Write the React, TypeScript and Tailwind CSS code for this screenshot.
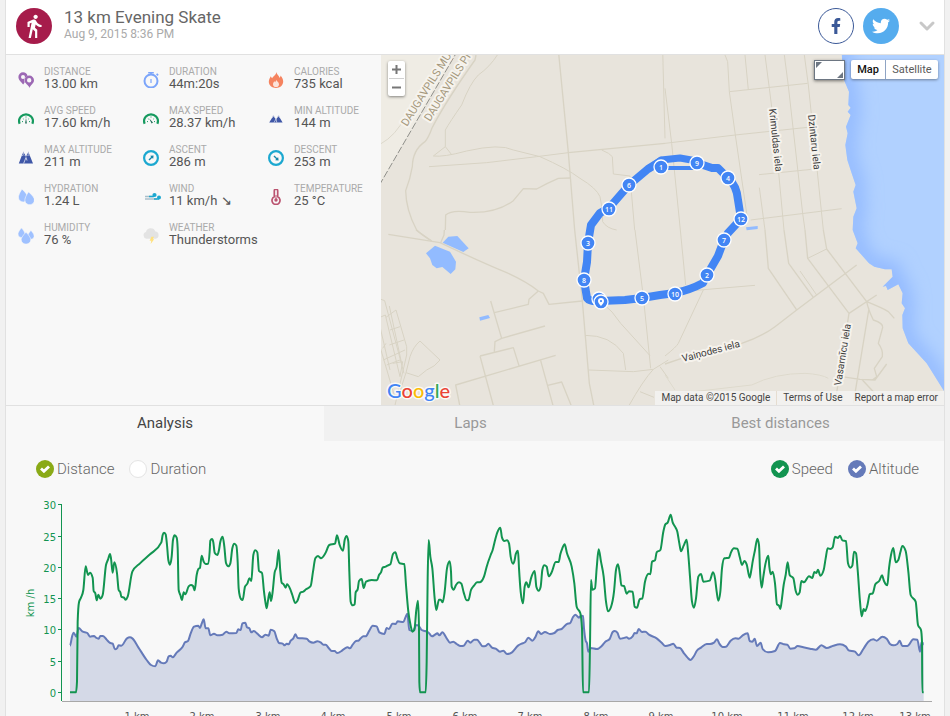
import React from "react";
import { MdDirectionsWalk } from "react-icons/md";
import { FaFacebookF, FaTwitter } from "react-icons/fa";
import { ChevronDown } from "lucide-react";

type Point = [number, number];

/* ---------- Stat icons (16 × 16) ---------- */

function Glyph({ children }: { children: React.ReactNode }) {
  return (
    <svg viewBox="0 0 16 16" className="h-4 w-4 shrink-0" aria-hidden="true">
      {children}
    </svg>
  );
}

const DROP = "M4 0C4 0 0 4.2 0 7.2A4 4 0 0 0 8 7.2C8 4.2 4 0 4 0Z";

const DistanceIcon = () => (
  <Glyph>
    <g fill="#9c68b4">
      <path fillRule="evenodd" d="M5 .3A4.6 4.6 0 0 0 .4 5C.4 8 3.6 10.400 5.200 12.500L6.600 10.500A5.300 5.300 0 0 1 9.500 4A4.600 4.600 0 0 0 5 .300ZM5 3A2 2 0 1 1 5 7A2 2 0 0 1 5 3Z" />
      <path fillRule="evenodd" d="M11.200 3.600A4.700 4.700 0 0 0 6.600 8.300C6.600 11.600 10.500 13 11.700 15.900C12.300 13 16 11.500 16 8.300A4.700 4.700 0 0 0 11.200 3.600ZM11.200 6.100A2.200 2.200 0 1 1 11.200 10.500A2.200 2.200 0 0 1 11.200 6.100Z" />
    </g>
  </Glyph>
);

const DurationIcon = () => (
  <Glyph>
    <circle cx="8" cy="9" r="6.500" fill="none" stroke="#7ca5fa" strokeWidth="2" />
    <path d="M5.200 0H10.800V1.500H8.800V3H7.200V1.500H5.200ZM13 2.300L14.300 1.200L15.700 2.700L14.500 3.900ZM7.400 7H8.600V11H7.400Z" fill="#7ca5fa" />
  </Glyph>
);

const CaloriesIcon = () => (
  <Glyph>
    <path d="M8.300 0C8.800 2.500 11 3.600 11.500 5.800C12.200 5.400 12.600 4.500 12.500 3.500C14.300 5.300 15.200 7.500 15.200 9.600C15.200 13.400 12 16 8 16S.8 13.400.8 9.800C.8 7.500 2 6 2.800 4.200C3.300 5 3.500 5.700 4.200 6.300C5 4.200 8.300 3 8.300 0Z" fill="#f5835f" />
    <path d="M8.200 7.800C8.500 9.400 11 10.200 11 12.200A3 2.800 0 0 1 5 12.200C5 10.600 6 10 6.200 9.200C6.700 9.500 7 9.800 7.200 10.200C7.700 9.500 8.200 8.800 8.200 7.800Z" fill="#fbe3da" />
  </Glyph>
);

const GaugeIcon = ({ max }: { max?: boolean }) => (
  <Glyph>
    <path d="M1.700 12.800C.7 10.500 1 7.500 2.900 5.500A7 7 0 0 1 13.100 5.500C15 7.500 15.300 10.500 14.300 12.800" fill="none" stroke="#169a5f" strokeWidth="2.200" />
    <path d="M4 10.600H5M11 10.600H12M4.900 7.500L5.600 8.100M11.100 7.500L10.400 8.100M8 5.500V6.500" stroke="#169a5f" strokeWidth="1" />
    <path d={max ? "M6.200 7.400L10 11.400L8.600 12.600Z" : "M8 7L8.900 12.500H7.100Z"} fill="#1c6b55" />
  </Glyph>
);

const MaxAltitudeIcon = () => (
  <Glyph>
    <path d="M.8 13.500L4.600 3.500H6.400L8 7L9.300 3.500H11L15 13.500Z" fill="#3f57a7" />
    <path d="M4.700 3.600L5.300 1.200L6.100 3.600ZM9.700 3.600L10.300 1.200L11 3.600Z" fill="#9aa4cd" />
    <path d="M4.300 5.800L5.300 4.600L6.200 5.600M9.200 5.600L10.200 4.600L11.100 5.800M5.600 13.500L8 7.500L9 10.500" fill="none" stroke="#e4e7f2" strokeWidth=".8" />
  </Glyph>
);

const MinAltitudeIcon = () => (
  <Glyph>
    <path d="M1.200 11.500L5.400 4.800L8 8.600L10.600 4.800L14.600 11.500Z" fill="#3f57a7" />
    <path d="M4.300 6.800L5.400 4.600L6.600 6.600M9.400 6.600L10.600 4.600L11.700 6.800" fill="none" stroke="#c4cae2" strokeWidth=".9" />
    <path d="M6 11.500L8 8L8.800 11.500" fill="none" stroke="#dfe3f0" strokeWidth=".7" />
  </Glyph>
);

const CompassIcon = ({ down }: { down?: boolean }) => (
  <Glyph>
    <circle cx="8" cy="8" r="6.900" fill="none" stroke="#1ca8d0" strokeWidth="2.200" />
    <path
      d="M10.600 5.400L10.200 8.800L9 7.900L6.500 10.500L5.500 9.500L8.100 7L7.200 5.800Z"
      fill="#1686a8"
      transform={down ? "rotate(90 8 8)" : undefined}
    />
  </Glyph>
);

const HydrationIcon = () => (
  <Glyph>
    <g fill="#9fc1ff" stroke="#f8f8f8" strokeWidth=".5">
      <path d={DROP} transform="translate(0 .2) rotate(-8 4 5) scale(1.150)" />
      <path d={DROP} transform="translate(6.400 3) rotate(-8 4 5) scale(1.200 1.150)" />
    </g>
  </Glyph>
);

const HumidityIcon = () => (
  <Glyph>
    <g fill="#9fc1ff" stroke="#f8f8f8" strokeWidth=".5">
      <path d={DROP} transform="translate(.1 0) scale(.85)" />
      <path d={DROP} transform="translate(9.800 2.500) scale(.78)" />
      <path d={DROP} transform="translate(3.200 4.300) scale(1.200 1.050)" />
    </g>
  </Glyph>
);

const WindIcon = () => (
  <svg viewBox="0 0 18 16" className="-mr-[2px] h-4 w-[18px] shrink-0" aria-hidden="true">
    <path d="M2 7.500H10M2 10H14" stroke="#a9bfca" strokeWidth="1.500" />
    <path d="M6 7.500H11M11 10H16" stroke="#1ca8d0" strokeWidth="1.500" />
    <circle cx="11.500" cy="6" r="2.100" fill="#1ca8d0" />
    <circle cx="16" cy="8.500" r="2" fill="#1ca8d0" />
  </svg>
);

const TemperatureIcon = () => (
  <Glyph>
    <path d="M6.300 1.800A1.700 1.700 0 0 1 9.700 1.800V7.800A4 4 0 1 1 6.300 7.800Z" fill="none" stroke="#bb5470" strokeWidth="1.700" />
    <circle cx="8" cy="11" r="1.700" fill="#bb5470" />
    <path d="M8 6V11" stroke="#bb5470" strokeWidth="1" />
  </Glyph>
);

const WeatherIcon = () => (
  <Glyph>
    <path d="M3.500 10.700A3.500 3.500 0 0 1 3 3.900A4.900 4.900 0 0 1 12.400 3.600A3.600 3.600 0 0 1 12.700 10.700Z" fill="#e3e3e3" />
    <path d="M8.500 8.800H11L9.700 11.200H11.200L7.600 16L8.300 12.800H6.600Z" fill="#ffe17d" />
  </Glyph>
);

const stats: { label: string; value: string; icon: React.ReactNode }[] = [
  { label: "DISTANCE", value: "13.00 km", icon: <DistanceIcon /> },
  { label: "DURATION", value: "44m:20s", icon: <DurationIcon /> },
  { label: "CALORIES", value: "735 kcal", icon: <CaloriesIcon /> },
  { label: "AVG SPEED", value: "17.60 km/h", icon: <GaugeIcon /> },
  { label: "MAX SPEED", value: "28.37 km/h", icon: <GaugeIcon max /> },
  { label: "MIN ALTITUDE", value: "144 m", icon: <MinAltitudeIcon /> },
  { label: "MAX ALTITUDE", value: "211 m", icon: <MaxAltitudeIcon /> },
  { label: "ASCENT", value: "286 m", icon: <CompassIcon /> },
  { label: "DESCENT", value: "253 m", icon: <CompassIcon down /> },
  { label: "HYDRATION", value: "1.24 L", icon: <HydrationIcon /> },
  { label: "WIND", value: "11 km/h ↘", icon: <WindIcon /> },
  { label: "TEMPERATURE", value: "25 °C", icon: <TemperatureIcon /> },
  { label: "HUMIDITY", value: "76 %", icon: <HumidityIcon /> },
  { label: "WEATHER", value: "Thunderstorms", icon: <WeatherIcon /> },
];

/* ---------- Map ---------- */

const markers: { x: number; y: number; n: string }[] = [
  { x: 661, y: 167, n: "1" },
  { x: 697, y: 163, n: "9" },
  { x: 728, y: 178, n: "4" },
  { x: 741, y: 219, n: "12" },
  { x: 724, y: 240, n: "7" },
  { x: 707, y: 275, n: "2" },
  { x: 675, y: 294, n: "10" },
  { x: 642, y: 298, n: "5" },
  { x: 584, y: 280, n: "8" },
  { x: 588, y: 243, n: "3" },
  { x: 609, y: 209, n: "11" },
  { x: 629, y: 185, n: "6" },
];

const COAST =
  "M530 120L530 165L537 240L552 275L550 315L557 323L548 335L557 345L543 380L548 400L541 435L547 480L560 520L572 555L565 575L575 625L565 650L563 690L578 730L572 745L590 765L612 790L628 800L660 808L680 808L683 830L653 860L663 858L668 870L700 853L713 880L710 910L720 925L712 945L713 985L730 1030L785 1090L840 1178L900 1250";

function StreetLabel({ x, y, angle, size, fill, children }: { x: number; y: number; angle: number; size: number; fill: string; children: string }) {
  return (
    <text
      transform={`translate(${x} ${y}) rotate(${angle})`}
      fontSize={size}
      fill={fill}
      stroke="#f6f3ed"
      strokeWidth="4"
      strokeLinejoin="round"
      paintOrder="stroke"
    >
      {children}
    </text>
  );
}

function MapCanvas() {
  return (
    <svg viewBox="0 0 563 350" preserveAspectRatio="xMidYMid slice" className="block h-full w-full" role="img" aria-label="Route map">
      <defs>
        <clipPath id="sea">
          <path d={`${COAST}L1000 1250V120Z`} />
        </clipPath>
        <filter id="soften" x="-50%" y="-20%" width="200%" height="140%">
          <feGaussianBlur stdDeviation="26" />
        </filter>
      </defs>
      <rect width="563" height="350" fill="#e8e4dc" />

      {/* north-west */}
      <g transform="translate(-1 -5) scale(.333333)" fill="none" stroke="#d8d3c4" strokeWidth="4" strokeLinejoin="round">
        <path d="M0 0H234L0 402Z" fill="#efece4" stroke="none" />
        <path d="M234 0L0 402" stroke="#8f8f8a" strokeWidth="3" strokeDasharray="22 6" />
        <path d="M288 15L285 30Q200 150 157 232Q145 265 135 275Q98 300 97 350Q90 390 77 422Q78 480 110 540Q125 555 155 573" />
        <path d="M352 15Q330 50 295 75Q270 100 245 165Q210 215 196 240V290L215 314" strokeWidth="3" />
        <path d="M196 290L160 318Q190 322 260 303Q360 280 400 300L480 320Q560 355 600 385Q650 415 660 440Q670 480 668 515Q680 535 710 540" strokeWidth="3" />
        <path d="M147 350L320 338L470 320L565 308" strokeWidth="3" />
        <path d="M565 308L855 280" />
        <path d="M535 0L565 308L584 540" />
        <path d="M570 384L535 385Q500 400 470 417L430 416Q410 440 400 452Q350 490 270 487Q215 478 197 495L196 540" />
        <path d="M665 300Q690 310 697 320L700 372L750 378L764 540" strokeWidth="3" />
        <path d="M0 283Q50 255 75 200" stroke="#dcd8cb" strokeWidth="3" />
        <path d="M848 0L855 265" strokeWidth="3" />
      </g>

      {/* south-west */}
      <g transform="translate(-1 175) scale(.333333)" fill="none" stroke="#d8d3c4" strokeWidth="4" strokeLinejoin="round">
        <path d="M25 13L180 38Q300 95 380 128Q440 155 475 183L490 190L507 223L607 213" />
        <path d="M108 0L155 33M193 0L192 15L182 38" />
        <path d="M475 183L447 208L445 223L343 248M332 213L365 325L495 288M365 325L345 335L343 365M300 378L400 353L417 407M300 378L341 530M240 530L227 465L527 376M482 392L520 530M503 466L545 456L575 530" />
        <path d="M584 0L607 213L628 460L642 530" />
        <path d="M765 0L790 200L812 415M663 215Q700 245 722 280L810 377M615 316Q690 315 730 370L737 420M625 420L760 425L820 418" strokeWidth="3" />
        <path d="M745 530Q790 450 820 418L865 390M780 485L822 502M840 410L865 445" strokeWidth="3" />
        <path d="M3 208L14 212L72 430M28 228L66 405M0 262L16 255L60 440M0 350L44 500M18 262L48 240L80 350L80 375L44 530M0 290L30 420M8 355L18 340M10 390L75 360M20 405L60 390M30 300L60 290M28 345L72 330M38 400L68 395L60 440" strokeWidth="3" />
        <path d="M120 333Q100 350 90 380L78 428L115 440L140 420Q165 410 180 390ZM78 428L55 500" strokeWidth="3" />
        <g fill="#92bbff" stroke="none">
          <path d="M188 38L205 20L232 18L266 55L250 66Z" />
          <path d="M138 70L165 47L210 65L228 95L226 118L212 132L187 111L170 115L157 105L150 85Z" />
          <path d="M298 262L325 255L330 264L300 272Z" />
        </g>
      </g>

      {/* east */}
      <g transform="translate(284 -55) scale(.333333)" fill="none" stroke="#d8d3c4" strokeWidth="4" strokeLinejoin="round">
        <path d="M180 165L188 185L193 275L211 405L248 660M240 165L250 270M300 165L313 265L330 400L357 690M358 165L370 258L413 640L420 690M418 165L430 255L475 690M193 275L428 250M0 430L211 405L428 382" strokeWidth="3" />
        <path d="M282 524L440 508M257 660L530 626M283 563L300 690M0 265L20 430L46 690L62 855" strokeWidth="3" />
        <path d="M0 1092L50 1075L230 1030Q290 1010 330 980L395 930L455 885L575 795" />
        <path d="M0 1068Q35 1040 40 1030L115 870M70 873L270 856" strokeWidth="3" />
        <path d="M300 690L310 805L395 930M357 690L371 790L445 892M420 690L428 775L552 940M475 690L485 747L605 905" />
        <path d="M405 813L455 885M428 775L485 747" strokeWidth="3" />
        <path d="M552 940L635 885M552 940L510 1210M605 905Q655 925 670 935L688 955M605 905Q610 930 625 960Q655 970 653 982L640 1030Q655 1050 652 1070L628 1105L635 1130L622 1140M612 925L565 1210M665 1092L630 1140L585 1138L530 1130M590 1138L628 1178" />
        <path d="M0 1185L260 1155Q330 1120 420 1120Q470 1123 490 1135M0 1125L30 1170" stroke="#dedacd" strokeWidth="3" />
        <path d="M243 682L278 678V687L245 691Z" fill="#92bbff" stroke="none" />
        <g clipPath="url(#sea)">
          <rect x="500" y="120" width="520" height="1130" fill="#b1d1ff" stroke="none" />
          <path d={COAST} stroke="#93baff" strokeWidth="56" filter="url(#soften)" />
        </g>
      </g>

      <g transform="translate(-381 -55)" fontFamily="Roboto, sans-serif">
        <StreetLabel x={407} y={127} angle={-58} size={11} fill="#a5987c">DAUGAVPILS MU</StreetLabel>
        <StreetLabel x={430} y={122} angle={-58} size={11} fill="#a5987c">DAUGAVPILS PI</StreetLabel>
        <StreetLabel x={769} y={109} angle={84} size={10} fill="#3d3d3d">Krimuldas iela</StreetLabel>
        <StreetLabel x={808} y={115} angle={84} size={10} fill="#3d3d3d">Dzintaru iela</StreetLabel>
        <StreetLabel x={683} y={362} angle={-15} size={10} fill="#3d3d3d">Vaiņodes iela</StreetLabel>
        <StreetLabel x={841} y={386} angle={-81} size={10} fill="#3d3d3d">Vasarnīcu iela</StreetLabel>

        <g fill="none" stroke="#4285f4" strokeLinejoin="round" strokeLinecap="round">
          <path strokeWidth="8" d="M697 163L712 168L718 168L728 178Q737 186 738 200L741 219L728 233L724 240L718 256L707 275L703 283Q690 290 675 293L660 295L642 298L625 300L600 301Q590 302 587 298L584 280L587 262L588 243L591 225L600 213L609 208L629 185L648 169L661 161" />
          <path strokeWidth="7" d="M650 168L661 160L680 158L697 161" />
          <path strokeWidth="4" d="M661 168H697" />
        </g>
        {markers.map((m) => (
          <g key={m.n}>
            <circle cx={m.x} cy={m.y} r="7" fill="#4285f4" stroke="#fff" strokeWidth="1.300" />
            <text x={m.x} y={m.y + 3} textAnchor="middle" fontSize="7" fontFamily="'Open Sans', sans-serif" fontWeight="600" fill="#fff">
              {m.n}
            </text>
          </g>
        ))}
        <g fill="#4285f4" stroke="#fff" strokeWidth="1.300">
          <circle cx="599" cy="299" r="7" />
          <circle cx="601" cy="302" r="7" />
        </g>
        <path fillRule="evenodd" fill="#fff" d="M601 298A3 3 0 0 0 598 301C598 303 601 306 601 306S604 303 604 301A3 3 0 0 0 601 298ZM601 300A1.100 1.100 0 1 1 601 302.200A1.100 1.100 0 0 1 601 300Z" />

        <text x="387" y="398" fontSize="20" fontFamily="Lato, sans-serif" fontWeight="500" stroke="#ffffff" strokeOpacity=".8" strokeWidth="3" strokeLinejoin="round" paintOrder="stroke">
          <tspan fill="#4285f4">G</tspan>
          <tspan fill="#ea4335">o</tspan>
          <tspan fill="#fbbc05">o</tspan>
          <tspan fill="#4285f4">g</tspan>
          <tspan fill="#34a853">l</tspan>
          <tspan fill="#ea4335">e</tspan>
        </text>
      </g>
    </svg>
  );
}

function RouteMap() {
  return (
    <div className="relative h-[350px] min-w-0 flex-1 overflow-hidden bg-[#e8e4dc]">
      <MapCanvas />
      <div className="absolute top-[6px] left-[7px] flex w-[17px] flex-col rounded-xs bg-white px-px shadow-[0_1px_3px_rgba(0,0,0,0.45)]">
        <button aria-label="Zoom in" className="flex h-[18px] items-center justify-center border-b border-[#d0d0d0]">
          <svg viewBox="0 0 9 9" className="h-[9px] w-[9px]"><path d="M4.500 0V9M0 4.500H9" stroke="#777" strokeWidth="2" /></svg>
        </button>
        <button aria-label="Zoom out" className="flex h-[17px] items-center justify-center">
          <svg viewBox="0 0 9 9" className="h-[9px] w-[9px]"><path d="M0 4.500H9" stroke="#777" strokeWidth="2" /></svg>
        </button>
      </div>
      <div className="absolute top-[5px] right-[6px] flex items-start gap-[6px] text-[11px]">
        <button aria-label="Resize map" className="flex h-5 w-[31px] items-center justify-center border border-[#6d7682] bg-white shadow-[0_1px_3px_rgba(0,0,0,0.5)]">
          <svg viewBox="0 0 27 16" className="h-4 w-[27px]"><path d="M0 0H6L0 6ZM27 16H21L27 10Z" fill="#6d7682" /></svg>
        </button>
        <div className="flex h-[19px] rounded-xs bg-white leading-[19px] shadow-[0_1px_3px_rgba(0,0,0,0.4)]">
          <button className="w-[35px] border-r border-[#8fa4c4] font-medium text-[#111]">Map</button>
          <button className="w-[52px] text-[#5a5a5a]">Satellite</button>
        </div>
      </div>
      <div className="absolute right-0 bottom-0 flex h-[14px] items-center bg-[#f5f5f5]/75 text-[10px] leading-[14px] text-[#444]">
        <span className="border-r border-[#e6ddd0] px-[6px]">Map data ©2015 Google</span>
        <a href="#terms" className="px-[6px]">Terms of Use</a>
        <a href="#report" className="px-[6px]">Report a map error</a>
      </div>
    </div>
  );
}

/* ---------- Chart ---------- */

/* Samples are stored in thirds of a pixel, one segment per stretch of the track. */
function join(segments: [number, string][]): Point[] {
  return segments.flatMap(([offset, text]) =>
    text.split(" ").map((pair): Point => {
      const [x, y] = pair.split(",").map(Number);
      return [x + offset, y];
    }),
  );
}

const speed = join([
  [0, "210,592 228,592 231,560 233,380 237,322 243,308 250,285 257,214 264,240 270,233 278,248 281,288 286,295 290,316 295,299 301,311 308,300 318,210 324,194 330,177 333,190 338,233 343,202 351,235 356,285 361,292 364,305 372,308 377,314 383,305 397,230 420,205 450,178 484,142 488,120 492,113 497,118 501,150 505,195 510,209 515,185 519,135 524,121 530,128 533,160 536,285 541,300 546,315 551,292 556,298 566,274 573,270 579,273 584,286 590,240 595,222 600,218 605,182 611,200 617,207 624,206 629,170 631,137 636,132 640,142 644,173 652,180 657,165 661,140 668,125 673,155 678,204 685,214 691,205 697,160 703,146 709,152 713,200 716,280 720,305"],
  [720, "3,312 8,315 15,275 22,266 28,250 34,258 40,180 46,166 52,172 57,228 66,234 72,290 76,320 80,340 85,310 89,292 93,318 98,290 104,232 110,215 116,165 121,230 125,263 131,268 137,278 141,268 151,283 157,300 166,324 172,318 182,292 190,290 198,283 212,273 219,230 226,190 234,183 243,190 256,175 268,150 285,146 291,121 299,150 309,167 314,135 320,123 325,140 328,230 332,320 338,331 344,328 347,292 353,283 357,258 365,252 371,279 378,260 395,255 411,256 417,240 423,232 428,218 437,215 444,211 451,208 459,177 466,172 472,190 479,205 493,207 498,270 505,350 512,392 517,410 523,405 529,345 534,317 537,400 538,560 540,592 557,592 560,500 563,250 566,135 571,185 577,220 584,310 589,345 597,314 602,314 608,322 614,290 621,220 629,199 633,230 635,275 641,284 648,270 657,262 664,266 671,292 680,316 685,316 693,285 702,272 711,262 719,262"],
  [1440, "5,258 12,245 20,215 32,180 38,165 44,140 52,112 61,98 66,128 73,138 81,136 87,145 92,185 99,206 104,195 107,178 114,167 117,220 122,290 129,325 134,275 139,262 146,277 153,250 164,228 169,275 176,287 182,275 187,225 193,211 200,215 206,244 215,232 227,201 236,201 241,178 247,160 254,148 261,175 275,215 283,265 290,335 301,355 306,400 309,592 327,592 330,450 333,255 337,284 345,280 350,220 356,163 363,200 371,245 378,320 384,349 393,336 402,290 408,225 414,208 420,240 424,271 432,273 440,296 447,289 458,290 464,335 471,338 479,313 487,310 495,260 506,236 511,238 516,200 525,196 530,172 541,165 550,110 556,88 563,83 572,59 578,82 585,95 592,110 598,145 603,169 611,152 620,134 625,180 630,245 636,320 642,338 648,310 655,245 663,237 670,260 689,257"],
  [2130, "9,232 15,250 20,290 25,317 31,290 36,220 43,190 57,188 63,172 72,160 82,161 89,185 96,210 103,198 110,208 119,248 124,225 128,200 135,165 142,131 147,150 150,225 155,278 160,245 166,208 175,182 178,215 182,238 188,230 195,265 201,328 207,332 211,342 216,310 221,270 227,240 233,202 239,240 250,250 257,287 263,299 269,292 274,258 282,262 297,244 307,249 313,231 319,234 324,224 331,242 341,225 347,190 353,160 361,162 368,157 375,125 384,129 390,122 397,136 408,138 414,205 421,218 427,212 432,170 438,175 443,225 450,320 455,364 461,342 466,348 473,327 479,298 488,295 496,268 508,257 516,241 522,258 532,271 537,220 543,180 550,159 557,202 565,195 571,172 577,153 587,168 595,230 602,300 617,320 624,390 633,405 636,440 637,592 641,592"],
]);

const altitude = join([
  [0, "210,452 216,425 221,413 229,425 236,399 247,409 262,414 270,425 282,423 288,428 296,431 301,423 309,423 320,434 329,443 338,446 345,463 351,460 356,451 364,452 381,430 390,427 397,430 415,457 440,495 453,510 466,514 474,496 483,503 492,505 500,500 506,484 512,482 518,487 530,473 548,455 555,442 564,438 572,415 582,395 595,392 600,399 605,386 611,373 617,400 625,400 631,421 642,416 652,421 668,419 679,410 688,415 709,414 715,403 720,405"],
  [720, "2,405 7,385 16,383 21,397 28,400 34,412 41,408 52,416 66,427 76,419 86,422 92,404 103,409 110,430 117,444 128,446 134,451 140,446 146,448 152,437 160,430 166,418 173,429 200,431 208,439 220,443 232,439 243,443 250,449 257,449 266,459 275,468 284,468 291,474 306,467 315,460 323,457 330,460 338,449 348,438 355,437 362,430 370,424 377,424 388,407 398,392 410,394 418,412 433,417 440,399 447,402 457,386 467,387 473,379 490,381 496,368 502,356 508,405 518,408 530,390 538,395 545,405 555,408 566,413 576,424 585,419 592,415 598,421 607,412 620,430 630,443 640,440 650,447 662,453 671,452 683,437 691,443 703,434 711,434 719,443"],
  [1440, "8,454 17,453 25,446 36,458 47,461 60,470 70,467 81,477 96,472 114,452 125,446 135,442 145,428 157,437 165,428 175,409 183,417 195,411 210,417 223,414 233,405 245,402 262,386 270,385 279,366 286,359 297,368 303,362 309,363 312,400 317,437 321,445 325,470 332,459 351,462 365,453 376,440 389,432 398,411 404,408 412,413 420,431 428,430 440,427 447,431 458,424 464,414 470,415 476,402 486,411 496,410 507,419 530,430 545,443 556,453 570,450 580,446 590,458 600,459 612,475 622,487 631,495 642,483 650,468 663,458 680,447"],
  [2130, "0,447 12,443 21,433 28,446 38,456 48,455 62,437 76,430 86,431 98,421 113,415 119,438 127,440 134,431 141,453 152,443 158,462 174,472 195,468 210,444 222,448 232,449 241,461 252,460 263,453 280,457 300,461 318,464 334,451 350,459 370,452 390,448 407,454 416,466 435,470 446,481 460,462 475,440 490,433 500,437 517,425 530,431 540,447 550,451 562,447 569,437 577,453 592,453 610,433 622,434 630,470 635,440 641,448"],
]);

/* Monotone cubic interpolation: smooth, with no overshoot at peaks. */
function smooth(points: Point[]): string {
  const n = points.length;
  const h: number[] = [];
  const s: number[] = [];
  for (let i = 0; i < n - 1; i++) {
    h.push(points[i + 1][0] - points[i][0]);
    s.push((points[i + 1][1] - points[i][1]) / h[i]);
  }
  const t = points.map((_, i) => {
    if (i === 0 || i === n - 1) return 0;
    const a = s[i - 1];
    const b = s[i];
    if (a * b <= 0) return 0;
    const p = (a * h[i] + b * h[i - 1]) / (h[i - 1] + h[i]);
    return Math.sign(a) * 2 * Math.min(Math.abs(a), Math.abs(b), Math.abs(p) / 2);
  });
  let d = `M${points[0][0]} ${points[0][1]}`;
  for (let i = 0; i < n - 1; i++) {
    const [x0, y0] = points[i];
    const [x1, y1] = points[i + 1];
    const k = h[i] / 3;
    d += `C${x0 + k} ${y0 + k * t[i]} ${x1 - k} ${y1 - k * t[i + 1]} ${x1} ${y1}`;
  }
  return d;
}

const speedTicks = [0, 5, 10, 15, 20, 25, 30];
const kmTicks = [1, 2, 3, 4, 5, 6, 7, 8, 9, 10, 11, 12, 13];

function Chart() {
  const altitudePath = smooth(altitude);
  return (
    <svg viewBox="6 0 938 240" className="mt-[17px] block w-full" role="img" aria-label="Speed and altitude over distance">
      <g transform="scale(.333333)" fill="none" strokeLinejoin="round">
        <path d={`${altitudePath}V618H210Z`} fill="#d4d9e7" />
        <path d={altitudePath} stroke="#657ab9" strokeWidth="6" />
        <path d={smooth(speed)} stroke="#129450" strokeWidth="6" />
      </g>
      <path d="M62 206.500H932" stroke="#a8a8a8" />
      <path d="M61.500 9V206" stroke="#129450" />
      <g fontFamily="'DejaVu Sans', Verdana, sans-serif" fontSize="10">
        {speedTicks.map((v) => {
          const y = Math.round(197 - v * 6.26) + 0.5;
          return (
            <g key={v}>
              <path d={`M58 ${y}H62`} stroke="#129450" />
              <text x="56" y={y + 4} textAnchor="end" fill="#129450">{v}</text>
            </g>
          );
        })}
        <text transform="translate(34 108) rotate(-90)" textAnchor="middle" fill="#129450">km /h</text>
        {kmTicks.map((k) => (
          <text key={k} x={Math.min(Math.round(71 + k * 65.6), 915)} y="225" textAnchor="middle" fill="#555">
            {k} km
          </text>
        ))}
      </g>
    </svg>
  );
}

function Toggle({ label, type, name, color, checked }: { label: string; type: "radio" | "checkbox"; name: string; color: string; checked?: boolean }) {
  return (
    <label className="flex items-center gap-[3px] text-[15px] leading-[18px] font-light text-[#666]">
      <span className="grid h-[18px] w-[18px] place-items-center">
        <input
          type={type}
          name={name}
          defaultChecked={checked}
          className={`peer col-start-1 row-start-1 h-[18px] w-[18px] appearance-none rounded-full border border-[#e4e4e4] bg-white checked:border-transparent ${color}`}
        />
        <svg viewBox="0 0 10 8" className="pointer-events-none col-start-1 row-start-1 hidden h-2 w-[10px] peer-checked:block" aria-hidden="true">
          <path d="M1 3.600L3.900 6.300L9 1.400" fill="none" stroke="#fff" strokeWidth="2.800" />
        </svg>
      </span>
      {label}
    </label>
  );
}

export default function App() {
  return (
    <div className="h-screen overflow-y-auto bg-[#f1f1f1] px-[5px] font-[Roboto,'Noto_Sans',sans-serif] [scrollbar-width:none]">
      <main className="min-h-full border-x border-[#e1e1e1] bg-[#f8f8f8]">
        <header className="flex h-[55px] items-start gap-3 border-b border-[#e1e1e1] bg-white pt-2 pr-[5px] pl-[10px]">
          <span className="flex h-9 w-9 items-center justify-center rounded-full bg-[#a61c4b] text-white">
            <MdDirectionsWalk size={26} />
          </span>
          <div className="flex-1">
            <h1 className="text-[17px] leading-[18px] text-[#666]">13 km Evening Skate</h1>
            <p className="text-[12px] leading-[17px] text-[#aaa]">Aug 9, 2015 8:36 PM</p>
          </div>
          <div className="flex items-center gap-[9px]">
            <button aria-label="Share on Facebook" className="flex h-9 w-9 items-center justify-center rounded-full border border-[#3b5998] text-[#3b5998]">
              <FaFacebookF size={16} />
            </button>
            <button aria-label="Share on Twitter" className="flex h-9 w-9 items-center justify-center rounded-full bg-[#55acee] text-white">
              <FaTwitter size={18} />
            </button>
          </div>
          <button aria-label="More" className="ml-1 flex h-9 items-center text-[#c8c8c8]">
            <ChevronDown size={24} strokeWidth={3} />
          </button>
        </header>

        <section className="flex">
          <dl className="grid w-[375px] shrink-0 grid-cols-3 content-start gap-y-[14px] pt-[11px]">
            {stats.map((s) => (
              <div key={s.label} className="flex h-[25px] items-end gap-[10px] pl-3 whitespace-nowrap">
                <span className="flex pb-[3px]">{s.icon}</span>
                <div>
                  <dt className="text-[10px] leading-[11px] text-[#aaa]">{s.label}</dt>
                  <dd className="text-[13px] leading-[14px] text-[#555]">{s.value}</dd>
                </div>
              </div>
            ))}
          </dl>
          <RouteMap />
        </section>

        <nav className="grid grid-cols-[318fr_293fr_327fr] border-t border-[#e1e1e1] text-[15px]" role="tablist">
          <button role="tab" aria-selected="true" className="h-[35px] text-[#444]">Analysis</button>
          <button role="tab" aria-selected="false" className="h-[35px] bg-[#f1f1f1] text-[#999]">Laps</button>
          <button role="tab" aria-selected="false" className="h-[35px] bg-[#f1f1f1] text-[#999]">Best distances</button>
        </nav>

        <section>
          <div className="flex justify-between pt-[19px] pr-[25px] pl-[30px]">
            <div className="flex gap-[15px]">
              <Toggle label="Distance" type="radio" name="axis" color="checked:bg-[#8aaa17]" checked />
              <Toggle label="Duration" type="radio" name="axis" color="checked:bg-[#8aaa17]" />
            </div>
            <div className="flex gap-[15px]">
              <Toggle label="Speed" type="checkbox" name="speed" color="checked:bg-[#129450]" checked />
              <Toggle label="Altitude" type="checkbox" name="altitude" color="checked:bg-[#657ab9]" checked />
            </div>
          </div>
          <Chart />
        </section>
      </main>
    </div>
  );
}
